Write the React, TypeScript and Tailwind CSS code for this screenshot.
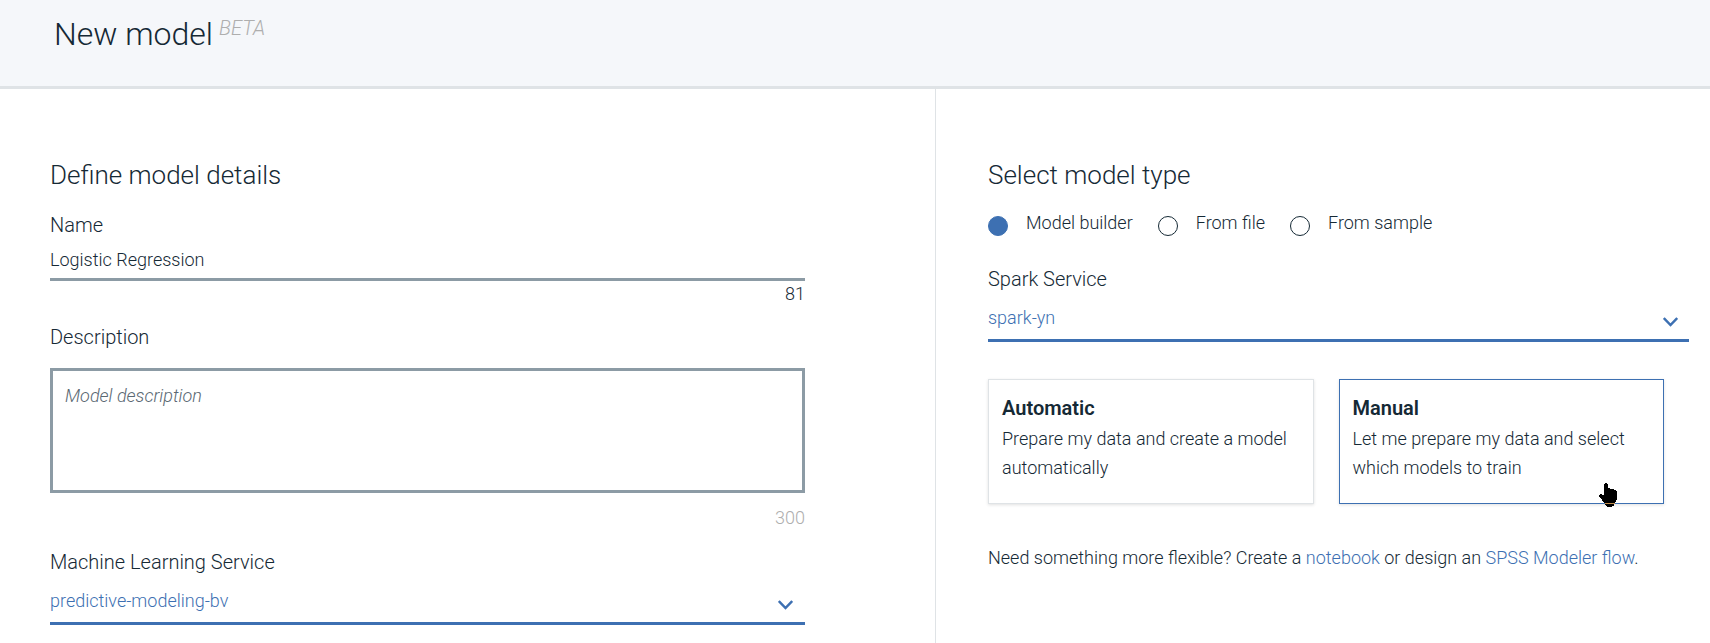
import { useState } from "react";

function Chevron({ className }: { className: string }) {
  return (
    <svg
      className={`pointer-events-none col-start-1 row-start-1 self-start justify-self-end ${className}`}
      width="15"
      height="10"
      viewBox="0 0 15 10"
      fill="none"
      stroke="#3d70b2"
      strokeWidth="2.5"
      aria-hidden="true"
    >
      <path d="M0.8 1 7.5 8 14.2 1" />
    </svg>
  );
}

function ServiceSelect({ id, label, value, chevron }: { id: string; label: string; value: string; chevron: string }) {
  return (
    <div>
      <label htmlFor={id} className="block text-xl leading-7">
        {label}
      </label>
      <div className="grid">
        <select
          id={id}
          defaultValue={value}
          className="col-start-1 row-start-1 h-[49px] w-full appearance-none border-b-3 border-[#3d70b2] bg-transparent pt-1 text-lg text-[#3d70b2] outline-none"
        >
          <option>{value}</option>
        </select>
        <Chevron className={`mt-6 ${chevron}`} />
      </div>
    </div>
  );
}

function HandPointer() {
  return (
    <svg
      className="pointer-events-none absolute right-[46px] -bottom-1"
      width="18"
      height="24"
      viewBox="0 0 18 24"
      aria-hidden="true"
    >
      <path
        d="M5 1h1V0h2v1h1v4h2v1h4v1h2v1h1v9h-1v2h-1v2h-1v2h-2v1H8v-1H7v-1H6v-2H5v-1H4v-1H3v-2H2v-1H1v-1H0v-2h1v-1h2v1h2z"
        fill="#000"
      />
      <path d="M6 20h10v1H6z" fill="#c28f4d" />
    </svg>
  );
}

const types = ["Model builder", "From file", "From sample"];
const modes = [
  { title: "Automatic", text: "Prepare my data and create a model automatically" },
  { title: "Manual", text: "Let me prepare my data and select which models to train" },
];

export default function App() {
  const [type, setType] = useState("Model builder");
  const [mode, setMode] = useState("Manual");
  const [name, setName] = useState("Logistic Regression");

  return (
    <div className="flex min-h-screen flex-col bg-white font-['Roboto',sans-serif] font-light text-[#152935]">
      <header className="border-b-3 border-[#dfe3e6] bg-[#f5f7fa] px-[54px] pt-3.5 pb-8">
        <h1 className="flex items-start gap-1.5 text-[32px] leading-10">
          New model
          <em className="text-xl leading-7 text-[#aeaeae]">BETA</em>
        </h1>
      </header>

      <main className="grid grow grid-cols-[935fr_775fr]">
        <section className="pt-[70px] pr-[130px] pl-[50px]">
          <h2 className="text-[26px] leading-8">Define model details</h2>
          <div className="mt-5">
            <label htmlFor="name" className="block text-xl leading-7">
              Name
            </label>
            <input
              id="name"
              value={name}
              maxLength={100}
              onChange={(e) => setName(e.target.value)}
              className="block h-[42px] w-full border-b-3 border-[#8c9ba5] pt-0.5 text-lg outline-none"
            />
            <p className="text-right text-lg leading-[26px]">{100 - name.length}</p>
          </div>
          <div className="mt-4">
            <label htmlFor="description" className="block text-xl leading-7">
              Description
            </label>
            <textarea
              id="description"
              placeholder="Model description"
              className="mt-[17px] block h-[125px] w-full resize-none border-3 border-[#8c9ba5] px-3 py-[11px] text-lg leading-7 outline-none placeholder:text-[#5a6872] placeholder:italic"
            />
            <p className="mt-3 text-right text-lg leading-[26px] text-[#aeaeae]">300</p>
          </div>
          <div className="mt-[17px]">
            <ServiceSelect id="ml" label="Machine Learning Service" value="predictive-modeling-bv" chevron="mr-3" />
          </div>
        </section>

        <section className="border-l border-[#dfe3e6] pt-[70px] pr-[21px] pl-[52px]">
          <h2 className="text-[26px] leading-8">Select model type</h2>
          <div role="radiogroup" aria-label="Model type" className="mt-[18px] flex flex-wrap gap-x-[25px]">
            {types.map((t) => (
              <label key={t} className="flex items-start gap-[18px] text-lg leading-7">
                <input
                  type="radio"
                  name="type"
                  checked={type === t}
                  onChange={() => setType(t)}
                  className="mt-[7px] size-5 appearance-none rounded-full border border-[#152935] checked:border-[#3d70b2] checked:bg-[#3d70b2]"
                />
                {t}
              </label>
            ))}
          </div>
          <div className="mt-7">
            <ServiceSelect id="spark" label="Spark Service" value="spark-yn" chevron="mr-[11px]" />
          </div>
          <div className="mt-[37px] grid grid-cols-2 gap-[25px] pr-[25px]">
            {modes.map((m) => (
              <button
                key={m.title}
                type="button"
                aria-pressed={mode === m.title}
                onClick={() => setMode(m.title)}
                className={`relative border px-[13px] pt-3.5 pb-[21px] text-left shadow-[0_1px_3px_rgba(0,0,0,0.12)] ${
                  mode === m.title ? "border-[#3d70b2]" : "border-[#dfe3e6]"
                }`}
              >
                <strong className="mb-0.5 block text-xl leading-7 font-semibold">{m.title}</strong>
                <span className="block text-lg leading-[29px]">{m.text}</span>
                {m.title === "Manual" && <HandPointer />}
              </button>
            ))}
          </div>
          <p className="mt-10 text-lg leading-7">
            Need something more flexible? Create a{" "}
            <a href="#notebook" className="text-[#3d70b2]">
              notebook
            </a>{" "}
            or design an{" "}
            <a href="#flow" className="text-[#3d70b2]">
              SPSS Modeler flow
            </a>
            .
          </p>
        </section>
      </main>
    </div>
  );
}
